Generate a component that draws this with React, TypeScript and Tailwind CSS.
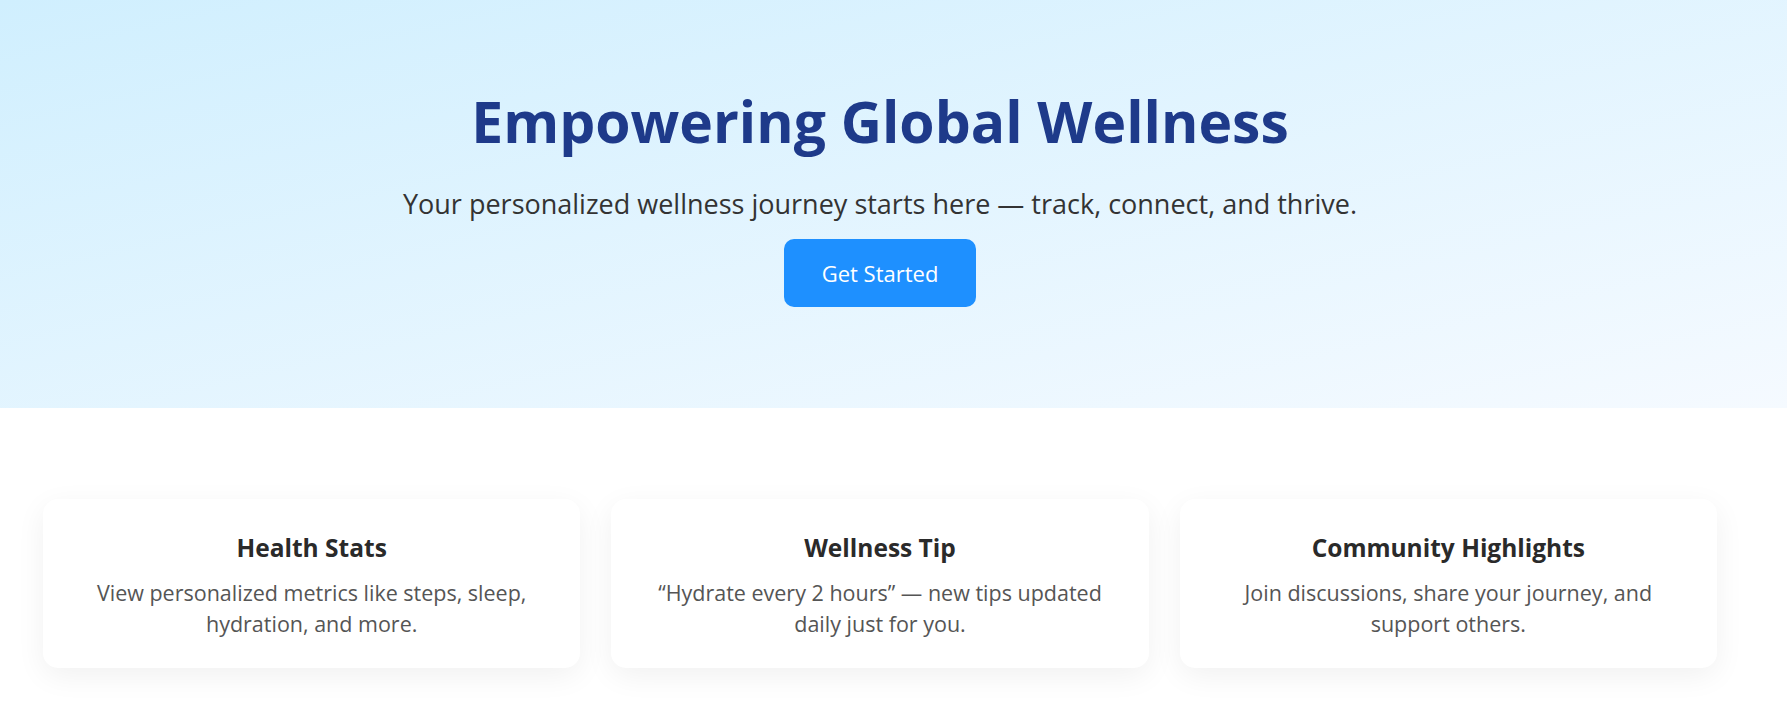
import React from 'react';

const cards = [
  {
    title: 'Health Stats',
    text: 'View personalized metrics like steps, sleep, hydration, and more.',
  },
  {
    title: 'Wellness Tip',
    text: '\u201CHydrate every 2 hours\u201D \u2014 new tips updated daily just for you.',
  },
  {
    title: 'Community Highlights',
    text: 'Join discussions, share your journey, and support others.',
  },
];

const App: React.FC = () => {
  return (
    <div className="min-h-screen bg-white font-['Open_Sans',sans-serif]">
      <section className="flex flex-col items-center bg-linear-to-br from-[#d0effe] to-[#f5faff] pt-[85px] pr-[27px] pb-[101px] text-center">
        <h1 className="text-[57px] leading-[72px] font-bold text-[#1e3a8a]">Empowering Global Wellness</h1>
        <p className="mt-[27px] text-[27px] leading-[39px] text-[#333]">
          Your personalized wellness journey starts here — track, connect, and thrive.
        </p>
        <button className="mt-4 flex h-[68px] w-[192px] items-center justify-center rounded-[10px] bg-[#1e90ff] text-[22px] text-white">
          Get Started
        </button>
      </section>

      <section className="grid grid-cols-3 gap-[31px] pt-[91px] pr-[70px] pb-[45px] pl-[43px]">
        {cards.map((card) => (
          <div
            key={card.title}
            className="rounded-[15px] bg-white px-[40px] pt-[33px] pb-[29px] text-center shadow-[0_8px_30px_rgba(0,0,0,0.06)]"
          >
            <h3 className="text-[24.5px] leading-[31px] font-bold text-[#2a2a2a]">{card.title}</h3>
            <p className="mt-[15px] text-[21.5px] leading-[30.7px] text-[#555]">{card.text}</p>
          </div>
        ))}
      </section>
    </div>
  );
};

export default App;
